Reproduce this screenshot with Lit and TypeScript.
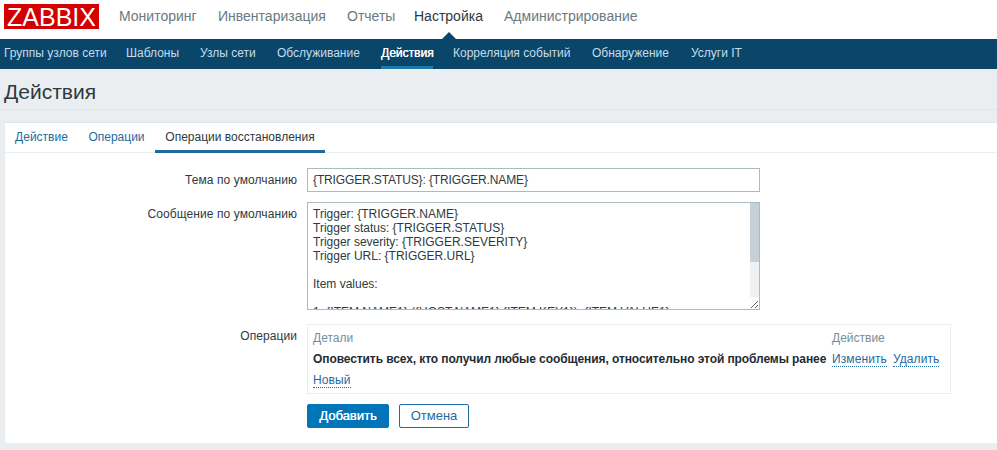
import { LitElement, html, css } from "lit";
import { customElement } from "lit/decorators.js";

const MSG = `Trigger: {TRIGGER.NAME}
Trigger status: {TRIGGER.STATUS}
Trigger severity: {TRIGGER.SEVERITY}
Trigger URL: {TRIGGER.URL}

Item values:

1. {ITEM.NAME1} ({HOST.NAME1}:{ITEM.KEY1}): {ITEM.VALUE1}
2. {ITEM.NAME2} ({HOST.NAME2}:{ITEM.KEY2}): {ITEM.VALUE2}
3. {ITEM.NAME3} ({HOST.NAME3}:{ITEM.KEY3}): {ITEM.VALUE3}

Original problem ID: {EVENT.ID}`;

const MAIN: [string, number][] = [
  ["Мониторинг", 79],
  ["Инвентаризация", 109],
  ["Отчеты", 47],
  ["Настройка", 70],
  ["Администрирование", 133],
];
const SUB: [string, number][] = [
  ["Группы узлов сети", 102],
  ["Шаблоны", 54],
  ["Узлы сети", 57],
  ["Обслуживание", 84],
  ["Действия", 52],
  ["Корреляция событий", 119],
  ["Обнаружение", 79],
  ["Услуги IT", 50],
];
const TABS: [string, number][] = [
  ["Действие", 73],
  ["Операции", 77],
  ["Операции восстановления", 170],
];

@customElement("app-root")
export class AppRoot extends LitElement {
  static styles = css`
    :host {
      display: block;
      width: 997px;
      height: 450px;
      overflow: hidden;
      background: #ebeef0;
      font-family: "Liberation Sans", Arial, sans-serif;
      font-size: 12px;
      color: #2e3a41;
    }
    .top {
      height: 39px;
      background: #fff;
      display: flex;
      align-items: flex-start;
      padding-left: 4px;
      box-sizing: border-box;
    }
    .logo {
      width: 95px;
      height: 25px;
      margin-top: 4px;
      background: #d40000;
      color: #fff;
      font-size: 25px;
      line-height: 26px;
      text-align: center;
      flex: none;
    }
    .menu {
      display: flex;
      gap: 20px;
      margin-left: 20px;
      font-size: 14px;
      line-height: 16px;
      padding-top: 8px;
    }
    .menu span {
      color: #6b7a82;
      position: relative;
      height: 31px;
      white-space: nowrap;
    }
    .menu span.on {
      color: #2e3a41;
    }
    .menu span.on::after {
      content: "";
      position: absolute;
      left: 50%;
      bottom: 0;
      margin-left: -7px;
      border: 7px solid transparent;
      border-top: 0;
      border-bottom-color: #0a466a;
    }
    .sub {
      height: 30px;
      background: #0a466a;
      display: flex;
      gap: 20px;
      padding-left: 4px;
      box-sizing: border-box;
      color: #c6dcea;
      line-height: 29px;
    }
    .sub span {
      flex: none;
      min-width: 0;
      height: 30px;
      box-sizing: border-box;
      white-space: nowrap;
    }
    .sub span.on {
      color: #fff;
      border-bottom: 3px solid #1f78ad;
      text-shadow: 0.3px 0 0 #fff;
    }
    .head {
      height: 41px;
      box-sizing: border-box;
      border-bottom: 1px solid #dfe4e7;
      padding: 11px 0 0 4px;
      font-size: 21px;
      line-height: 24px;
    }
    .card {
      margin: 12px 0 0 4px;
      height: 321px;
      background: #fff;
      border-top: 1px solid #dfe4e7;
      border-left: 1px solid #e6eaec;
      box-sizing: border-box;
    }
    .tabs {
      display: flex;
      height: 30px;
      box-sizing: border-box;
      border-bottom: 1px solid #ebeef0;
      line-height: 28px;
    }
    .tabs span {
      height: 30px;
      box-sizing: border-box;
      text-align: center;
      color: #1f6a9e;
    }
    .tabs span.on {
      color: #2e3a41;
      border-bottom: 3px solid #1f6a9e;
    }
    .form {
      display: grid;
      grid-template-columns: 292px 644px;
      column-gap: 10px;
      padding-top: 15px;
    }
    .lab {
      text-align: right;
      line-height: 14px;
      padding-top: 5px;
      letter-spacing: 0.08px;
    }
    .inp,
    textarea {
      display: block;
      width: 453px;
      box-sizing: border-box;
      border: 1px solid #acbbc2;
      font: inherit;
      color: #2e3a41;
      padding: 4px 5px;
      margin: 0;
      background: #fff;
      outline: none;
    }
    .inp {
      height: 24px;
      margin-bottom: 10px;
      line-height: 14px;
      letter-spacing: -0.13px;
    }
    .area {
      position: relative;
      width: 453px;
      height: 108px;
      margin-bottom: 14px;
    }
    textarea {
      height: 108px;
      line-height: 14px;
      resize: both;
      overflow: hidden;
      white-space: pre;
    }
    .track {
      position: absolute;
      top: 1px;
      right: 1px;
      width: 9px;
      height: 94px;
      background: #eff1f2;
    }
    .thumb {
      height: 59px;
      background: #c6d0d6;
    }
    .ops {
      width: 644px;
      height: 70px;
      box-sizing: border-box;
      border: 1px solid #ebeef0;
      padding: 6px 5px 0;
      line-height: 14px;
      display: grid;
      grid-template-columns: 519px auto;
      grid-auto-rows: 21px;
      align-content: start;
      margin-bottom: 10px;
    }
    .th {
      color: #768d99;
    }
    .b {
      font-weight: bold;
      white-space: nowrap;
      letter-spacing: -0.09px;
      color: #1f2c33;
    }
    .lnk {
      color: #1f6a9e;
      border-bottom: 1px dotted #1f6a9e;
      letter-spacing: 0.1px;
    }
    .acts {
      display: flex;
      gap: 6px;
      align-items: flex-start;
    }
    .new {
      grid-column: 1 / span 2;
    }
    .btns {
      grid-column: 2;
      display: flex;
      gap: 10px;
    }
    .btn {
      height: 24px;
      box-sizing: border-box;
      border: 1px solid #0275b8;
      border-radius: 2px;
      line-height: 22px;
      text-align: center;
      font-size: 13px;
    }
    .primary {
      width: 82px;
      background: #0275b8;
      color: #fff;
      text-shadow: 0.3px 0 0 #fff;
    }
    .second {
      width: 70px;
      background: #fff;
      color: #1f6a9e;
      border-color: #1f6a9e;
    }
  `;

  render() {
    return html`
      <div class="top">
        <div class="logo">ZABBIX</div>
        <div class="menu">
          ${MAIN.map(
            ([m, w]) => html`<span class=${m === "Настройка" ? "on" : ""} style="width:${w}px">${m}</span>`
          )}
        </div>
      </div>
      <div class="sub">
        ${SUB.map(
          ([m, w]) => html`<span class=${m === "Действия" ? "on" : ""} style="width:${w}px">${m}</span>`
        )}
      </div>
      <div class="head">Действия</div>
      <div class="card">
        <div class="tabs">
          ${TABS.map(
            ([m, w], i) => html`<span class=${i === 2 ? "on" : ""} style="width:${w}px">${m}</span>`
          )}
        </div>
        <div class="form">
          <div class="lab">Тема по умолчанию</div>
          <div><input class="inp" .value=${"{TRIGGER.STATUS}: {TRIGGER.NAME}"} /></div>
          <div class="lab">Сообщение по умолчанию</div>
          <div class="area">
            <textarea .value=${MSG}></textarea>
            <div class="track"><div class="thumb"></div></div>
          </div>
          <div class="lab">Операции</div>
          <div class="ops">
            <div class="th">Детали</div>
            <div class="th">Действие</div>
            <div class="b">Оповестить всех, кто получил любые сообщения, относительно этой проблемы ранее</div>
            <div class="acts"><span class="lnk">Изменить</span><span class="lnk">Удалить</span></div>
            <div class="new"><span class="lnk">Новый</span></div>
          </div>
          <div class="btns">
            <div class="btn primary">Добавить</div>
            <div class="btn second">Отмена</div>
          </div>
        </div>
      </div>
    `;
  }
}
